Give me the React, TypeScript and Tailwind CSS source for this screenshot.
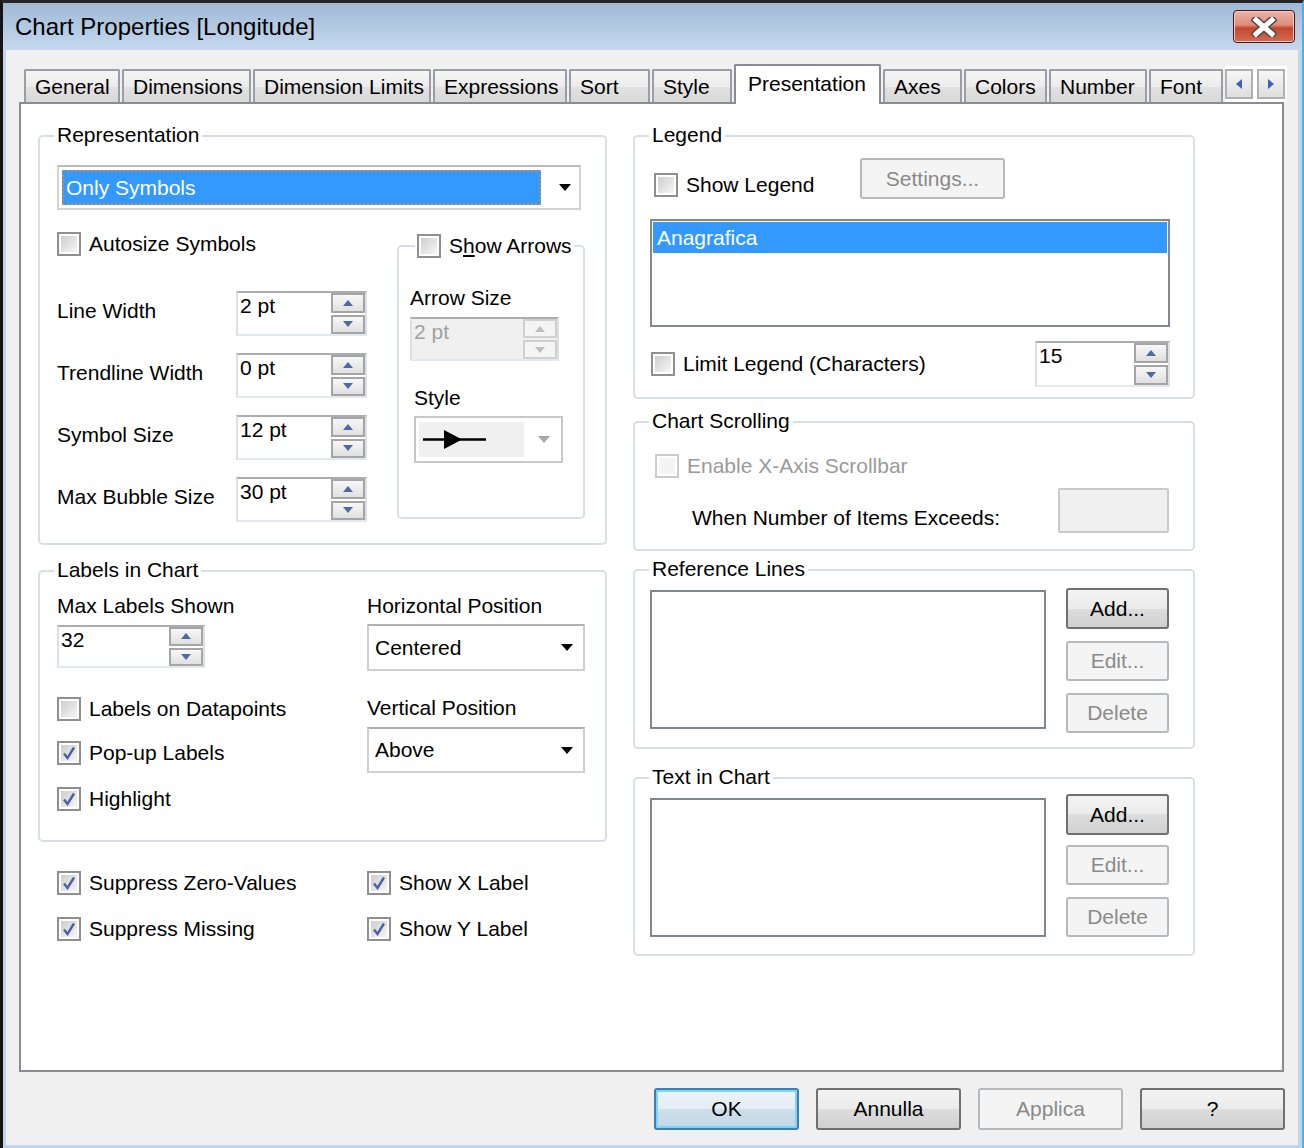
import React from 'react';

type Node = React.ReactNode;

const tabs = [
  { label: 'General', w: 'w-[96px]' },
  { label: 'Dimensions', w: 'w-[129px]' },
  { label: 'Dimension Limits', w: 'w-[178px]' },
  { label: 'Expressions', w: 'w-[134px]' },
  { label: 'Sort', w: 'w-[81px]' },
  { label: 'Style', w: 'w-[80px]' },
  { label: 'Presentation', w: 'w-[147px]', active: true },
  { label: 'Axes', w: 'w-[79px]' },
  { label: 'Colors', w: 'w-[83px]' },
  { label: 'Number', w: 'w-[98px]' },
  { label: 'Font', w: 'w-[74px]' },
];

function Tri({ up, color = '#4d6aa5' }: { up?: boolean; color?: string }) {
  return (
    <svg width="10" height="6" viewBox="0 0 10 6">
      <path d={up ? 'M0 6 L5 0 L10 6 Z' : 'M0 0 L10 0 L5 6 Z'} fill={color} />
    </svg>
  );
}

function Drop({ color = '#000' }: { color?: string }) {
  return (
    <svg width="12" height="7" viewBox="0 0 12 7">
      <path d="M0 0 H12 L6 7 Z" fill={color} />
    </svg>
  );
}

function Box({ checked, disabled }: { checked?: boolean; disabled?: boolean }) {
  return (
    <span
      className={`flex h-[24px] w-[24px] shrink-0 border-2 bg-white p-[2px] ${
        disabled ? 'border-[#cbcbcb]' : 'border-[#8e8f8f]'
      }`}
    >
      <span
        className={`flex flex-1 items-center justify-center ${
          disabled ? 'bg-[#f4f4f4]' : 'bg-gradient-to-br from-[#cdcdcd] to-[#f7f7f7]'
        }`}
      >
        {checked && (
          <svg width="14" height="14" viewBox="0 0 14 14">
            <path d="M2 7.5 L5.5 12 L12 1.5" fill="none" stroke="#4c61a6" strokeWidth="2.4" />
          </svg>
        )}
      </span>
    </span>
  );
}

function Check({
  label,
  checked,
  disabled,
  className = '',
}: {
  label: Node;
  checked?: boolean;
  disabled?: boolean;
  className?: string;
}) {
  return (
    <div className={`flex h-[24px] items-center gap-[8px] ${className}`}>
      <Box checked={checked} disabled={disabled} />
      <span className={`whitespace-nowrap leading-[26px] ${disabled ? 'text-[#9a9a9a]' : ''}`}>{label}</span>
    </div>
  );
}

function Spin({ value, className = '', disabled }: { value: string; className?: string; disabled?: boolean }) {
  return (
    <div
      className={`flex border-2 border-x-[#dbdfe6] border-b-[#e3e9ef] border-t-[#abadb3] ${
        disabled ? 'bg-[#f0f0f0] text-[#a0a0a0]' : 'bg-white'
      } ${className}`}
    >
      <span className="flex-1 pl-[2px] leading-[26px]">{value}</span>
      <div className="flex w-[34px] flex-col gap-[2px]">
        {[true, false].map((up) => (
          <div
            key={String(up)}
            className={`flex flex-1 items-center justify-center border-2 ${
              disabled
                ? 'border-[#d0d0d0] bg-[#f4f4f4]'
                : 'border-[#a5a5a5] bg-gradient-to-b from-[#f7f7f7] to-[#e0e0e0]'
            }`}
          >
            <Tri up={up} color={disabled ? '#bdbdbd' : '#4d6aa5'} />
          </div>
        ))}
      </div>
    </div>
  );
}

function Combo({ value, className = '' }: { value: string; className?: string }) {
  return (
    <div
      className={`flex items-center border-2 border-[#d0d0d0] border-t-[#b0b0b0] bg-white pl-[6px] pr-[10px] ${className}`}
    >
      <span className="flex-1 leading-[26px]">{value}</span>
      <Drop />
    </div>
  );
}

function Btn({
  label,
  disabled,
  primary,
  className = '',
}: {
  label: string;
  disabled?: boolean;
  primary?: boolean;
  className?: string;
}) {
  const look = primary
    ? 'border-[#3c7fb1] bg-[linear-gradient(to_bottom,#edf4fa_0%,#e3edf6_50%,#cfdfeb_50%,#c4d7e6_100%)] shadow-[inset_0_0_0_2px_#7fd3f7]'
    : disabled
      ? 'border-[#b5b9bc] bg-[#f4f4f4] text-[#8a8a8a]'
      : 'border-[#707070] bg-[linear-gradient(to_bottom,#f3f3f3_0%,#ebebeb_50%,#dddddd_50%,#d0d0d0_100%)]';
  return (
    <div className={`flex items-center justify-center rounded-[3px] border-2 leading-[26px] ${look} ${className}`}>
      {label}
    </div>
  );
}

function Group({ title, className = '', children }: { title: Node; className?: string; children?: Node }) {
  return (
    <div className={`rounded-[5px] border-2 border-[#d5dfe5] ${className}`}>
      <div className="-mt-[15px] ml-[14px] w-fit bg-white px-[3px] leading-[26px]">{title}</div>
      {children}
    </div>
  );
}

function List({ className = '', children }: { className?: string; children?: Node }) {
  return <div className={`border-2 border-[#828790] bg-white p-[1px] ${className}`}>{children}</div>;
}

function ButtonCol({ addTop, editTop }: { addTop: string; editTop: string }) {
  return (
    <div className={`ml-[20px] flex w-[103px] flex-col ${addTop}`}>
      <Btn label="Add..." className="h-[41px]" />
      <Btn label="Edit..." disabled className={`h-[40px] ${editTop}`} />
      <Btn label="Delete" disabled className="mt-[12px] h-[40px]" />
    </div>
  );
}

export default function App() {
  return (
    <div className="flex h-[1148px] w-[1304px] flex-col border-l-[3px] border-r-[2px] border-t-[3px] border-l-[#151515] border-r-[#3db8ea] border-t-[#262626] bg-[#bfd5ec] font-['Liberation_Sans',Arial,sans-serif] text-[21px] text-black">
      {/* title bar */}
      <div className="flex h-[47px] shrink-0 items-center justify-between bg-gradient-to-b from-[#a1b9d5] to-[#c4d9ef] pl-[12px] pr-[7px]">
        <span className="text-[24px] leading-[30px]">Chart Properties [Longitude]</span>
        <div className="flex h-[33px] w-[62px] items-center justify-center rounded-[4px] border border-[#4e1313] bg-[linear-gradient(to_bottom,#ecb4a8_0%,#de8d7a_45%,#c5462e_55%,#d36c52_100%)] shadow-[inset_0_0_0_1px_#f3c8bf]">
          <svg width="26" height="20" viewBox="0 0 26 20">
            <path d="M5 3 L21 17 M21 3 L5 17" stroke="#4a4a4a" strokeWidth="8" strokeLinecap="square" />
            <path d="M5 3 L21 17 M21 3 L5 17" stroke="#ffffff" strokeWidth="5" strokeLinecap="square" />
          </svg>
        </div>
      </div>

      {/* dialog body */}
      <div className="mb-[3px] ml-[3px] mr-[4px] flex-1 bg-[#f0f0f0] pt-[14px]">
        {/* tabs */}
        <div className="relative z-10 ml-[18px] flex h-[38px] items-end gap-[2px]">
          {tabs.map((t) =>
            t.active ? (
              <div
                key={t.label}
                className={`${t.w} -mb-[2px] h-[40px] rounded-t-[2px] border-2 border-b-0 border-[#898c95] bg-white pl-[12px] pt-[5px] leading-[26px] whitespace-nowrap`}
              >
                {t.label}
              </div>
            ) : (
              <div
                key={t.label}
                className={`${t.w} h-[33px] overflow-hidden rounded-t-[2px] border-2 border-b-0 border-[#9a9da5] bg-[linear-gradient(to_bottom,#f4f4f4_0%,#ececec_50%,#e2e2e2_50%,#d8d8d8_100%)] pl-[9px] pt-[3px] leading-[26px] whitespace-nowrap`}
              >
                {t.label}
              </div>
            ),
          )}
          <div className="flex h-[36px] w-[62px] items-center gap-[4px] bg-white">
            {['M6 0 L0 5 L6 10 Z', 'M0 0 L6 5 L0 10 Z'].map((d) => (
              <div
                key={d}
                className="flex h-[30px] w-[28px] items-center justify-center border-2 border-[#b0b0b0] bg-gradient-to-b from-[#f6f6f6] to-[#dedede]"
              >
                <svg width="6" height="10" viewBox="0 0 6 10">
                  <path d={d} fill="#3f5fb8" />
                </svg>
              </div>
            ))}
          </div>
        </div>

        {/* tab panel */}
        <div className="ml-[13px] flex h-[970px] w-[1265px] gap-[26px] border-2 border-[#898c95] bg-white pl-[17px] pt-[31px]">
          {/* left column */}
          <div className="w-[569px]">
            <Group title="Representation" className="h-[410px]">
              <div className="ml-[17px] mt-[17px] flex h-[45px] w-[524px] items-center border-2 border-[#d3d3d3] border-t-[#bcbcbc] bg-white p-[3px] pr-[8px]">
                <div className="flex h-full w-[479px] items-center border-2 border-dotted border-[#c98a4a] bg-[#3399ff] pl-[2px] text-white">
                  Only Symbols
                </div>
                <div className="flex flex-1 justify-end">
                  <Drop />
                </div>
              </div>

              <div className="ml-[17px] mt-[22px] flex items-start">
                <div className="w-[310px]">
                  <Check label="Autosize Symbols" />
                  <div className="mt-[35px] flex flex-col gap-[17px]">
                    {[
                      ['Line Width', '2 pt'],
                      ['Trendline Width', '0 pt'],
                      ['Symbol Size', '12 pt'],
                      ['Max Bubble Size', '30 pt'],
                    ].map(([l, v]) => (
                      <div key={l} className="flex items-center">
                        <span className="mb-[6px] w-[179px] leading-[26px]">{l}</span>
                        <Spin value={v} className="h-[45px] w-[131px]" />
                      </div>
                    ))}
                  </div>
                </div>

                <div className="ml-[30px] mt-[13px] h-[274px] w-[188px] rounded-[5px] border-2 border-[#d5dfe5]">
                  <div className="-mt-[13px] ml-[16px] w-fit bg-white px-[2px]">
                    <Check
                      label={
                        <>
                          S<span className="underline">h</span>ow Arrows
                        </>
                      }
                    />
                  </div>
                  <div className="ml-[11px] mt-[27px] leading-[26px]">Arrow Size</div>
                  <Spin value="2 pt" disabled className="ml-[11px] mt-[6px] h-[44px] w-[149px]" />
                  <div className="ml-[15px] mt-[24px] leading-[26px]">Style</div>
                  <div className="ml-[15px] mt-[5px] flex h-[47px] w-[149px] items-center border-2 border-[#c8c8c8] bg-white p-[3px]">
                    <div className="flex h-[35px] w-[105px] items-center bg-[#f0f0f0]">
                      <svg width="105" height="35" viewBox="0 0 105 35">
                        <path d="M4 17.5 H67" stroke="#000" strokeWidth="2.5" />
                        <path d="M25 8 L25 27 L43 17.5 Z" fill="#000" />
                      </svg>
                    </div>
                    <div className="flex flex-1 justify-end pr-[8px]">
                      <Drop color="#a6a6a6" />
                    </div>
                  </div>
                </div>
              </div>
            </Group>

            <Group title="Labels in Chart" className="mt-[25px] h-[272px]">
              <div className="ml-[17px] flex">
                <div className="w-[310px]">
                  <div className="mt-[10px] leading-[26px]">Max Labels Shown</div>
                  <Spin value="32" className="mt-[6px] h-[43px] w-[148px]" />
                  <Check label="Labels on Datapoints" className="mt-[29px]" />
                  <Check label="Pop-up Labels" checked className="mt-[20px]" />
                  <Check label="Highlight" checked className="mt-[22px]" />
                </div>
                <div className="w-[218px]">
                  <div className="mt-[10px] leading-[26px]">Horizontal Position</div>
                  <Combo value="Centered" className="mt-[5px] h-[47px]" />
                  <div className="mt-[24px] leading-[26px]">Vertical Position</div>
                  <Combo value="Above" className="mt-[6px] h-[46px]" />
                </div>
              </div>
            </Group>

            <div className="ml-[19px] mt-[29px] grid grid-cols-[310px_auto] gap-y-[22px]">
              <Check label="Suppress Zero-Values" checked />
              <Check label="Show X Label" checked />
              <Check label="Suppress Missing" checked />
              <Check label="Show Y Label" checked />
            </div>
          </div>

          {/* right column */}
          <div className="w-[562px]">
            <Group title="Legend" className="h-[264px]">
              <div className="ml-[15px] mt-[10px] flex items-start">
                <div className="w-[210px] pl-[4px] pt-[15px]">
                  <Check label="Show Legend" />
                </div>
                <Btn label="Settings..." disabled className="h-[41px] w-[145px]" />
              </div>
              <List className="ml-[15px] mt-[20px] h-[108px] w-[520px]">
                <div className="h-[31px] bg-[#3399ff] pl-[4px] leading-[31px] text-white">Anagrafica</div>
              </List>
              <div className="ml-[15px] mt-[14px] flex w-[520px] items-center justify-between">
                <Check label="Limit Legend (Characters)" className="ml-[1px]" />
                <Spin value="15" className="h-[46px] w-[135px]" />
              </div>
            </Group>

            <Group title="Chart Scrolling" className="mt-[22px] h-[130px]">
              <Check label="Enable X-Axis Scrollbar" disabled className="ml-[20px] mt-[20px]" />
              <div className="ml-[57px] mt-[10px] flex w-[477px] items-end justify-between">
                <span className="mb-[2px] leading-[26px]">When Number of Items Exceeds:</span>
                <div className="h-[45px] w-[111px] rounded-[2px] border-2 border-[#cacaca] bg-[#f0f0f0]" />
              </div>
            </Group>

            <Group title="Reference Lines" className="mt-[18px] h-[180px]">
              <div className="ml-[15px] flex items-start">
                <List className="mt-[8px] h-[139px] w-[396px]" />
                <ButtonCol addTop="mt-[6px]" editTop="mt-[12px]" />
              </div>
            </Group>

            <Group title="Text in Chart" className="mt-[28px] h-[179px]">
              <div className="ml-[15px] flex items-start">
                <List className="mt-[8px] h-[139px] w-[396px]" />
                <ButtonCol addTop="mt-[4px]" editTop="mt-[10px]" />
              </div>
            </Group>
          </div>
        </div>

        {/* dialog buttons */}
        <div className="mt-[16px] flex justify-end gap-[17px] pr-[13px]">
          <Btn label="OK" primary className="h-[42px] w-[145px]" />
          <Btn label="Annulla" className="h-[42px] w-[145px]" />
          <Btn label="Applica" disabled className="h-[42px] w-[145px]" />
          <Btn label="?" className="h-[42px] w-[145px]" />
        </div>
      </div>
    </div>
  );
}
